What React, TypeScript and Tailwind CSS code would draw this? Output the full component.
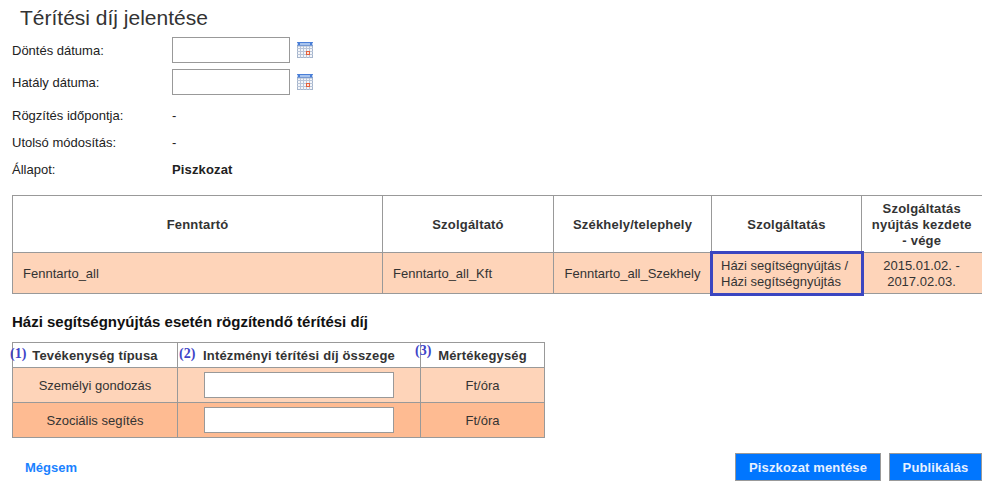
const F = "[font-family:'Liberation_Sans',Arial,sans-serif]";

function Cal() {
  return (
    <svg width="16" height="16" viewBox="0 0 16 16" className="shrink-0 ml-[7px]">
      <rect x="0" y="0" width="16" height="4" fill="#4a7fd8" />
      <rect x="3" y="1" width="10" height="2" fill="#a8c4ee" />
      <path d="M1 0.5v3l-1-1.5zM15 0.5v3l1-1.5z" fill="#fff" />
      <rect x="0.5" y="4" width="15" height="11.5" fill="#f4f6fa" stroke="#a5b5cc" />
      <path d="M3.5 4v12M6.5 4v12M9.5 4v12M12.5 4v12M0 6.5h16M0 9.5h16M0 12.5h16" stroke="#b9c5d8" strokeWidth="1" />
      <rect x="9.5" y="9.5" width="3" height="3" fill="#fbe3d8" stroke="#e5603c" strokeWidth="1" />
    </svg>
  );
}

function Marker({ n, className }: { n: number; className: string }) {
  return (
    <span className={`absolute text-[14px] leading-none font-bold text-[#4044c8] [font-family:'Liberation_Serif',serif] ${className}`}>
      ({n})
    </span>
  );
}

export default function App() {
  return (
    <div className={`${F} relative w-[989px] h-[485px] overflow-hidden bg-white text-[13px] text-[#222] pl-3`}>
      <h1 className="ml-2 pt-[5px] h-[37px] text-[21px] leading-[26px] font-normal text-[#333]">Térítési díj jelentése</h1>

      <div className="flex items-center h-[26px]">
        <span className="w-[160px] pt-[2px]">Döntés dátuma:</span>
        <input className="w-[118px] h-[26px] border border-[#999] bg-white" />
        <Cal />
      </div>
      <div className="flex items-center h-[26px] mt-[6px]">
        <span className="w-[160px] pt-[2px]">Hatály dátuma:</span>
        <input className="w-[118px] h-[26px] border border-[#999] bg-white" />
        <Cal />
      </div>
      <div className="flex items-center h-[16px] mt-[13px]">
        <span className="w-[160px]">Rögzítés időpontja:</span>
        <span>-</span>
      </div>
      <div className="flex items-center h-[16px] mt-[11px]">
        <span className="w-[160px]">Utolsó módosítás:</span>
        <span>-</span>
      </div>
      <div className="flex items-center h-[16px] mt-[11px]">
        <span className="w-[160px]">Állapot:</span>
        <span className="font-bold tracking-[0.15px]">Piszkozat</span>
      </div>

      <table className="mt-[17px] w-[969px] table-fixed border-collapse text-[#333]">
        <colgroup>
          <col className="w-[370px]" />
          <col className="w-[171px]" />
          <col className="w-[158px]" />
          <col className="w-[150px]" />
          <col className="w-[120px]" />
        </colgroup>
        <thead>
          <tr className="h-[57px] font-bold text-center tracking-[0.2px]">
            <th className="border border-[#999] pt-[2px]">Fenntartó</th>
            <th className="border border-[#999] pt-[2px]">Szolgáltató</th>
            <th className="border border-[#999] pt-[2px]">Székhely/telephely</th>
            <th className="border border-[#999] pt-[2px]">Szolgáltatás</th>
            <th className="border-t border-b border-l border-[#999] pt-[2px] leading-[16px]">
              Szolgáltatás<br />nyújtás kezdete<br />- vége
            </th>
          </tr>
        </thead>
        <tbody>
          <tr className="h-[41px] bg-[#fed4b9]">
            <td className="border border-[#999] pl-[10px] pt-[2px]">Fenntarto_all</td>
            <td className="border border-[#999] pl-[10px] pt-[2px]">Fenntarto_all_Kft</td>
            <td className="border border-[#999] text-center pt-[2px]">Fenntarto_all_Szekhely</td>
            <td className="outline-[3px] -outline-offset-1 outline-[#3b46c0] relative pl-[9px] pt-[2px] leading-[16px]">
              Házi segítségnyújtás /<br />Házi segítségnyújtás
            </td>
            <td className="border-y border-[#999] text-center pt-[2px] leading-[16px]">2015.01.02. -<br />2017.02.03.</td>
          </tr>
        </tbody>
      </table>

      <h2 className="mt-[20px] h-[16px] leading-[16px] text-[15px] font-bold text-[#111]">Házi segítségnyújtás esetén rögzítendő térítési díj</h2>

      <div className="relative mt-[12px] w-[532px]">
        <table className="w-[532px] table-fixed border-collapse text-[#333]">
          <colgroup>
            <col className="w-[165px]" />
            <col className="w-[243px]" />
            <col className="w-[124px]" />
          </colgroup>
          <thead>
            <tr className="h-[25px] font-bold tracking-[0.15px]">
              <th className="border border-[#999] pt-[2px]">Tevékenység típusa</th>
              <th className="border border-[#999] pt-[2px]">Intézményi térítési díj összege</th>
              <th className="border border-[#999] pt-[2px]">Mértékegység</th>
            </tr>
          </thead>
          <tbody>
            <tr className="h-[35px] bg-[#fed4b9] text-center">
              <td className="border border-[#999] pt-[2px]">Személyi gondozás</td>
              <td className="border border-[#999]">
                <input className="block mx-auto w-[190px] h-[26px] border border-[#999] bg-white" />
              </td>
              <td className="border border-[#999] pt-[2px]">Ft/óra</td>
            </tr>
            <tr className="h-[35px] bg-[#febb92] text-center">
              <td className="border border-[#999] pt-[2px]">Szociális segítés</td>
              <td className="border border-[#999]">
                <input className="block mx-auto w-[190px] h-[26px] border border-[#999] bg-white" />
              </td>
              <td className="border border-[#999] pt-[2px]">Ft/óra</td>
            </tr>
          </tbody>
        </table>
        <Marker n={1} className="left-[-2px] top-[5px]" />
        <Marker n={2} className="left-[167px] top-[5px]" />
        <Marker n={3} className="left-[403px] top-[2px]" />
      </div>

      <div className="mt-[15px] flex items-center justify-between w-[970px]">
        <a className="ml-[13px] pt-[2px] font-bold text-[#1a82ff]">Mégsem</a>
        <div className="flex gap-2">
          <button className="w-[146px] h-[28px] pt-[2px] border border-[#999] bg-[#0076ff] text-[#e6f0ff] font-bold tracking-[0.15px]">Piszkozat mentése</button>
          <button className="w-[93px] h-[28px] pt-[2px] border border-[#999] bg-[#0076ff] text-[#e6f0ff] font-bold tracking-[0.15px]">Publikálás</button>
        </div>
      </div>
    </div>
  );
}
